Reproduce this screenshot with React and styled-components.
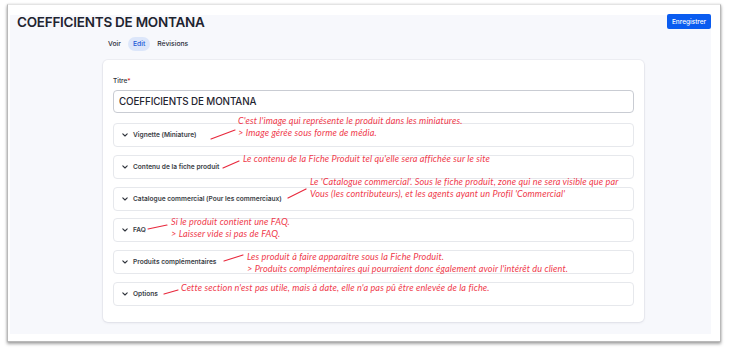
import React from "react";
import styled, { createGlobalStyle } from "styled-components";

const Global = createGlobalStyle`
  html, body { margin: 0; padding: 0; background: #ffffff; }
  body { font-family: Inter, "Noto Sans", sans-serif; }
`;

const Root = styled.div`
  position: relative;
  width: 729px;
  height: 353px;
  overflow: hidden;
  background: #ffffff;
`;

const Frame = styled.div`
  position: absolute;
  left: 7px;
  top: 4px;
  width: 714px;
  height: 338px;
  border: 1px solid #b9b9b9;
  border-top-color: #e4e4e4;
  box-shadow: 0 2px 3px rgba(0, 0, 0, 0.35), 0 0 2px rgba(0, 0, 0, 0.12);
  background: #ffffff;
  padding: 10px 9px 7px 2px;
  box-sizing: border-box;
`;

const Page = styled.div`
  height: 100%;
  background: #f7f8fc;
  display: flex;
  flex-direction: column;
`;

const Header = styled.div`
  display: flex;
  justify-content: space-between;
  align-items: flex-start;
  margin-top: -1px;
  padding-left: 7px;
`;

const Title = styled.h1`
  margin: 0;
  font-family: Inter, sans-serif;
  font-weight: 600;
  font-size: 13.5px;
  line-height: 16px;
  letter-spacing: -0.25px;
  color: #1f2430;
`;

const SaveButton = styled.button`
  margin-top: 0;
  height: 15px;
  width: 44px;
  padding: 0;
  border: none;
  border-radius: 2px;
  background: #0a5cf0;
  color: #fff;
  font-family: Inter, sans-serif;
  font-size: 6.5px;
  font-weight: 500;
`;

const Tabs = styled.nav`
  display: flex;
  align-items: center;
  gap: 6px;
  margin: 7px 0 0 90px;
  height: 14px;
`;

const Tab = styled.span`
  font-family: Inter, sans-serif;
  font-size: 6.8px;
  font-weight: 500;
  color: ${(p) => (p.$active ? "#1b58d6" : "#2b2f38")};
  background: ${(p) => (p.$active ? "#dce6fa" : "transparent")};
  border-radius: 8px;
  padding: ${(p) => (p.$active ? "3px 5px" : "3px 1px")};
  line-height: 8px;
`;

const Card = styled.section`
  margin: 9px 0 0 93px;
  width: 541px;
  height: 262px;
  box-sizing: border-box;
  background: #ffffff;
  border-radius: 5px;
  box-shadow: 0 0 0 1px rgba(20, 30, 60, 0.04), 0 1px 3px rgba(20, 30, 60, 0.08);
  padding: 17px 10px 16px 10px;
  display: flex;
  flex-direction: column;
`;

const Label = styled.label`
  font-family: Inter, sans-serif;
  font-size: 6.5px;
  font-weight: 500;
  color: #2b2f38;
  line-height: 8px;
  margin-bottom: 5px;
  span { color: #e02424; }
`;

const Input = styled.div`
  height: 23px;
  box-sizing: border-box;
  border: 1px solid #c9ccd3;
  border-radius: 4px;
  display: flex;
  align-items: center;
  padding-left: 5px;
  font-family: Inter, sans-serif;
  font-size: 9.8px;
  font-weight: 500;
  letter-spacing: -0.1px;
  color: #1f2430;
  margin-bottom: 10px;
`;

const Sections = styled.div`
  display: flex;
  flex-direction: column;
  gap: 7.8px;
`;

const Section = styled.div`
  height: 24px;
  box-sizing: border-box;
  border: 1px solid #e6e8ec;
  border-radius: 4px;
  display: flex;
  align-items: center;
  padding-left: 8px;
  gap: 5px;
  font-family: Inter, sans-serif;
  font-size: 6.6px;
  font-weight: 600;
  color: #3a3e46;
`;

const Chevron = () => (
  <svg width="6" height="4" viewBox="0 0 6 4">
    <path d="M0.8 0.8 L3 3 L5.2 0.8" fill="none" stroke="#2e323a" strokeWidth="1.1" strokeLinecap="round" strokeLinejoin="round" />
  </svg>
);

const Overlay = styled.svg`
  position: absolute;
  left: 0;
  top: 0;
  pointer-events: none;
`;

const Note = styled.div`
  position: absolute;
  left: ${(p) => p.$x}px;
  top: ${(p) => p.$y}px;
  white-space: nowrap;
  font-family: Lato, "Open Sans", sans-serif;
  font-style: italic;
  font-size: 9.1px;
  letter-spacing: 0.13px;
  line-height: 11.5px;
  color: #ef3a4c;
`;

const sections = [
  "Vignette (Miniature)",
  "Contenu de la fiche produit",
  "Catalogue commercial (Pour les commerciaux)",
  "FAQ",
  "Produits complémentaires",
  "Options",
];

const notes = [
  { x: 238, y: 115, lines: ["C'est l'image qui représente le produit dans les miniatures.", "> Image gérée sous forme de média."] },
  { x: 243, y: 153, lines: ["Le contenu de la Fiche Produit tel qu'elle sera affichée sur le site"] },
  { x: 310, y: 176, lines: ["Le 'Catalogue commercial'. Sous le fiche produit, zone qui ne sera visible que par", "Vous (les contributeurs), et les agents ayant un Profil 'Commercial'"] },
  { x: 171, y: 216, lines: ["Si le produit contient une FAQ.", "> Laisser vide si pas de FAQ."] },
  { x: 247, y: 251, lines: ["Les produit à faire apparaitre sous la Fiche Produit.", "> Produits complémentaires qui pourraient donc également avoir l'intérêt du client."] },
  { x: 181, y: 282, lines: ["Cette section n'est pas utile, mais à date, elle n'a pas pû être enlevée de la fiche."] },
];

const strokes = [
  [211, 139, 235, 130],
  [223, 168, 239, 161],
  [288, 198, 306, 189],
  [148, 229, 167, 225],
  [224, 261, 243, 255],
  [164, 294, 178, 290],
];

export default function App() {
  return (
    <>
      <Global />
      <Root>
        <Frame>
          <Page>
            <Header>
              <div>
                <Title>COEFFICIENTS DE MONTANA</Title>
                <Tabs>
                  <Tab>Voir</Tab>
                  <Tab $active>Edit</Tab>
                  <Tab>Révisions</Tab>
                </Tabs>
              </div>
              <SaveButton>Enregistrer</SaveButton>
            </Header>
            <Card>
              <Label>
                Titre<span>*</span>
              </Label>
              <Input>COEFFICIENTS DE MONTANA</Input>
              <Sections>
                {sections.map((s) => (
                  <Section key={s}>
                    <Chevron />
                    {s}
                  </Section>
                ))}
              </Sections>
            </Card>
          </Page>
        </Frame>
        <Overlay width="729" height="353">
          {strokes.map(([x1, y1, x2, y2], i) => (
            <line key={i} x1={x1} y1={y1} x2={x2} y2={y2} stroke="#e8283c" strokeWidth="1.2" strokeLinecap="round" />
          ))}
        </Overlay>
        {notes.map((n, i) => (
          <Note key={i} $x={n.x} $y={n.y}>
            {n.lines.map((l, j) => (
              <div key={j}>{l}</div>
            ))}
          </Note>
        ))}
      </Root>
    </>
  );
}
